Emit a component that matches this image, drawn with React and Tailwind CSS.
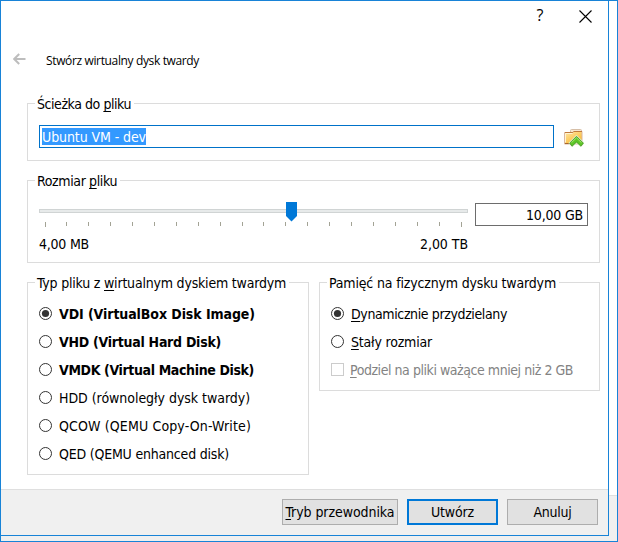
const fileTypes = [
  { label: "VDI (VirtualBox Disk Image)", style: "font-bold tracking-[-0.084px]", checked: true },
  { label: "VHD (Virtual Hard Disk)", style: "font-bold tracking-[-0.268px]" },
  { label: "VMDK (Virtual Machine Disk)", style: "font-bold tracking-[-0.368px]" },
  { label: "HDD (równoległy dysk twardy)", style: "tracking-[-0.042px]" },
  { label: "QCOW (QEMU Copy-On-Write)", style: "tracking-[0.137px]" },
  { label: "QED (QEMU enhanced disk)", style: "tracking-[-0.201px]" },
];

const ticks = [45, 66, 88, 110, 132, 154, 176, 198, 220, 242, 263, 285, 307, 329, 351, 373, 395, 417, 439, 461];

function Key({ children }) {
  return <span className="underline decoration-1 underline-offset-2 [text-decoration-skip-ink:none]">{children}</span>;
}

function Group({ title, className, children }) {
  return (
    <section className={`flex flex-col border border-[#dcdcdc] ${className}`}>
      <h2 className="-mt-[9px] ml-[7px] h-[18px] self-start bg-white pl-[2px] pr-[3px] leading-[18px]">{title}</h2>
      {children}
    </section>
  );
}

function Radio({ checked }) {
  return (
    <svg width="13" height="13" viewBox="0 0 13 13" className="mb-px shrink-0">
      <circle cx="6.5" cy="6.5" r="6" fill="#fff" stroke="#333" />
      {checked && <circle cx="6.5" cy="6.5" r="3.6" fill="#333" />}
    </svg>
  );
}

function FolderIcon() {
  return (
    <svg width="20" height="18" viewBox="0 0 20 18">
      <defs>
        <linearGradient id="folder" x1="0" y1="0" x2=".7" y2="1">
          <stop offset="0" stopColor="#ffe9a8" />
          <stop offset="1" stopColor="#fbb62c" />
        </linearGradient>
      </defs>
      <path d="M6.500 3V1.500q0-1 1-1h9q1 0 1 1V3" fill="#f7e6cf" stroke="#d6bfa8" />
      <path d="M.5 3.500h8l1-1h8.500v12.500H.5z" fill="url(#folder)" stroke="#d9b8a0" />
      <path d="M1 3.500h7.800l1-1H18" fill="none" stroke="#c07a3c" />
      <path d="M1 14.500h8" fill="none" stroke="#a9682c" />
      <path d="M1.500 13.500v-9h7" fill="none" stroke="#fff3d0" />
      <path d="M12.500 7 19.500 14 17 17.300 12.500 13.500 8 17.300 5.500 14z" fill="#58b927" stroke="#e9f5d8" strokeWidth="1.6" />
      <path d="M12.500 7.300 19.400 14.200 17 17.200 12.500 13.200 8 17.200 5.600 14.200z" fill="#5cc526" stroke="#3c8a20" strokeWidth=".7" />
      <path d="M7.500 13.700 12.500 8.800 17.500 13.700" fill="none" stroke="#a5ea6c" strokeWidth="1" />
    </svg>
  );
}

export default function App() {
  return (
    <div className="grid h-[542px] w-[618px] cursor-default grid-cols-1 grid-rows-1 overflow-hidden font-['DejaVu_Sans_Condensed','DejaVu_Sans',sans-serif] text-[14px] leading-[18px] whitespace-nowrap text-black">
      <div className="col-start-1 row-start-1 flex flex-col border border-[#1883d7] bg-white">
        <div className="mt-[494px] flex-1 border-t border-[#dfdfdf] bg-[#f0f0f0]" />
      </div>

      <main className="col-start-1 row-start-1 flex h-[536px] w-[609px] flex-col border border-[#1883d7] bg-white">
        <header className="h-[102px] shrink-0">
          <div className="flex h-[30px] items-start justify-end pr-[16px]">
            <span className="mt-[4px] mr-[35px] w-[8px] text-center font-['Open_Sans',sans-serif] text-[16px] leading-[20px]">?</span>
            <svg width="13" height="13" viewBox="0 0 13 13" className="mt-[9px]">
              <path d="M.5.5l12 12M12.500.5l-12 12" stroke="#000" strokeWidth="1.100" />
            </svg>
          </div>
          <div className="flex items-center pl-[12px] pt-[20px]">
            <svg width="13" height="12" viewBox="0 0 13 12" className="-mt-[5px]">
              <path d="M12.500 6H1.500M6.200 1 1.200 6l5 5" fill="none" stroke="#bdbdbd" strokeWidth="2" />
            </svg>
            <h1 className="ml-[20px] font-['Open_Sans',sans-serif] text-[12px] leading-[20px] tracking-[-0.360px]">Stwórz wirtualny dysk twardy</h1>
          </div>
        </header>

        <div className="flex flex-1 flex-col pl-[26px]">
          <Group className="h-[58px] w-[573px]" title={<span className="tracking-[-0.444px]">Ścieżka do <Key>p</Key>liku</span>}>
            <div className="flex items-center pl-[11px] pt-[12px]">
              <div className="flex h-[23px] w-[515px] items-center border border-[#0072c9] pl-[2px]">
                <span className="h-[17px] w-[104px] bg-[#3399ff] leading-[18px] tracking-[-0.090px] text-white">Ubuntu VM - dev</span>
              </div>
              <div className="ml-[10px] mt-[3px]"><FolderIcon /></div>
            </div>
          </Group>

          <Group className="mt-[19px] h-[83px] w-[573px]" title={<span className="tracking-[-0.381px]">Rozmiar <Key>p</Key>liku</span>}>
            <div className="flex pl-[11px] pt-[12px]">
              <div className="w-[429px]">
                <svg width="429" height="26" viewBox="39 202 429 26" className="block">
                  <rect x="39.500" y="209.500" width="428" height="3" fill="#e7eaea" stroke="#d0d4d4" />
                  <path d="M286 202h11v14l-5.500 5.500-5.500-5.500z" fill="#0078d7" />
                  {ticks.map((x, i) => (
                    <rect key={x} x={x} y="222" width="1" height={i % 19 === 0 ? 5 : 4} fill="#a3a395" />
                  ))}
                </svg>
                <div className="mt-[7px] flex justify-between">
                  <span className="tracking-[-0.221px]">4,00 MB</span>
                  <span className="tracking-[-0.054px]">2,00 TB</span>
                </div>
              </div>
              <div className="ml-[7px] mt-[1px] flex h-[23px] w-[113px] items-center justify-end border border-[#6d6d6d] pr-[4px]">
                <span className="tracking-[-0.182px]">10,00 GB</span>
              </div>
            </div>
          </Group>

          <div className="mt-[19px] flex items-start gap-[10px]">
            <Group className="h-[193px] w-[282px]" title={<span className="tracking-[-0.202px]">Typ pliku z <Key>w</Key>irtualnym dyskiem twardym</span>}>
              <div className="flex flex-col pl-[11px] pt-[8px]">
                {fileTypes.map((t) => (
                  <label key={t.label} className="flex h-[28px] items-center gap-[7px]">
                    <Radio checked={t.checked} />
                    <span className={t.style}>{t.label}</span>
                  </label>
                ))}
              </div>
            </Group>

            <Group className="h-[109px] w-[281px]" title={<span className="tracking-[-0.168px]">Pamięć na fizycznym dysku twardym</span>}>
              <div className="flex flex-col pl-[11px] pt-[8px]">
                <label className="flex h-[28px] items-center gap-[7px]">
                  <Radio checked />
                  <span className="tracking-[-0.382px]"><Key>D</Key>ynamicznie przydzielany</span>
                </label>
                <label className="flex h-[28px] items-center gap-[7px]">
                  <Radio />
                  <span className="tracking-[-0.195px]"><Key>S</Key>tały rozmiar</span>
                </label>
                <label className="flex h-[28px] items-center gap-[6px] text-[#838383]">
                  <span className="mb-px size-[13px] border border-[#cccccc]" />
                  <span className="tracking-[-0.452px]"><Key>P</Key>odziel na pliki ważące mniej niż 2 GB</span>
                </label>
              </div>
            </Group>
          </div>
        </div>

        <footer className="flex h-[46px] shrink-0 items-start justify-end border-t border-[#dfdfdf] bg-[#f0f0f0] pr-[10px] pt-[9px]">
          <button className="h-[26px] w-[116px] border border-[#adadad] bg-[#e1e1e1] text-center tracking-[-0.065px]"><Key>T</Key>ryb przewodnika</button>
          <button className="ml-[9px] h-[26px] w-[91px] border-2 border-[#0078d7] bg-[#e1e1e1] text-center tracking-[-0.159px]">Utwórz</button>
          <button className="ml-[9px] h-[26px] w-[91px] border border-[#adadad] bg-[#e1e1e1] text-center tracking-[-0.263px]">Anuluj</button>
        </footer>
      </main>
    </div>
  );
}
